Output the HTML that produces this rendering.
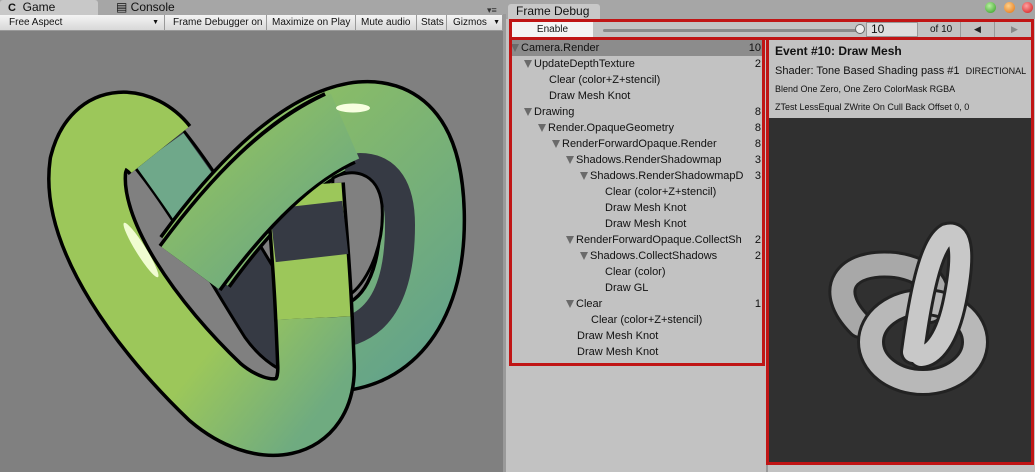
<!DOCTYPE html>
<html><head><style>
*{margin:0;padding:0;box-sizing:border-box}
body{width:1035px;height:472px;overflow:hidden;position:relative;background:#a6a6a6;font-family:"Liberation Sans",sans-serif;font-size:11px;color:#111}
.abs{position:absolute}
.tab{position:absolute;top:0;height:15px;font-size:12px;line-height:15px;padding-left:8px}
.tb{position:absolute;top:15px;height:16px;background:linear-gradient(#f4f4f4,#d8d8d8);border-right:1px solid #9a9a9a;border-bottom:1px solid #999;font-size:10px;line-height:16px;padding-left:8px;white-space:nowrap}
.row{position:absolute;left:0;width:252px;height:16px;line-height:16px;font-size:11px;white-space:nowrap;overflow:hidden}
.row .n{position:absolute;right:2px;top:0;background:#c2c2c2;padding-left:2px}
.tri{display:inline-block;width:0;height:0;border-left:4px solid transparent;border-right:4px solid transparent;border-top:8px solid #6a6a6a;margin-right:2px;vertical-align:-1px}
.red{position:absolute;border:3px solid #c01515}
</style></head><body>
<div class="abs" style="left:0;top:0;width:505px;height:15px;background:#a6a6a6"></div>
<div class="tab" style="left:0;width:98px;background:#c8c8c8;border-radius:3px 3px 0 0"><b style="font-size:11px">C</b>&nbsp; Game</div>
<div class="tab" style="left:108px;width:90px">▤ Console</div>
<div class="abs" style="left:487px;top:5px;font-size:9px;color:#333">▾≡</div>
<div class="tb" style="left:0;width:165px;padding-left:9px">Free Aspect<span style="position:absolute;right:5px;font-size:7px">▼</span></div>
<div class="tb" style="left:165px;width:102px">Frame Debugger on</div>
<div class="tb" style="left:267px;width:89px;padding-left:5px">Maximize on Play</div>
<div class="tb" style="left:356px;width:61px;padding-left:5px">Mute audio</div>
<div class="tb" style="left:417px;width:30px;padding-left:4px">Stats</div>
<div class="tb" style="left:447px;width:56px;padding-left:6px">Gizmos<span style="position:absolute;right:2px;font-size:7px">▼</span></div>
<div class="abs" style="left:0;top:31px;width:503px;height:441px;background:#808080"></div>
<div class="abs" style="left:503px;top:14px;width:3px;height:458px;background:#9a9a9a"></div>
<svg class="abs" style="left:0;top:0" width="503" height="472" viewBox="0 0 503 472">
<defs>
<linearGradient id="g1" x1="0" y1="0" x2="1" y2="1"><stop offset="0" stop-color="#9cc75a"/><stop offset="0.65" stop-color="#9cc75a"/><stop offset="1" stop-color="#6fab80"/></linearGradient>
<linearGradient id="g2" x1="0" y1="0" x2="1" y2="1"><stop offset="0" stop-color="#93c35e"/><stop offset="1" stop-color="#65a489"/></linearGradient>
</defs>
<!-- back tube -->
<path d="M160,150 C200,200 235,265 270,320 C295,355 330,355 360,345" fill="none" stroke="#000" stroke-width="64"/>
<path d="M160,150 C200,200 235,265 270,320 C295,355 330,355 360,345" fill="none" stroke="#363a44" stroke-width="58"/>
<path d="M160,150 C185,185 200,205 212,228" fill="none" stroke="#6fa88a" stroke-width="58"/>
<!-- right lobe + diagonal (back part) -->
<path d="M345,348 C400,338 424,282 422,212 C420,145 398,118 355,125 C300,135 240,200 195,262" fill="none" stroke="#000" stroke-width="88"/>
<path d="M345,348 C400,338 424,282 422,212 C420,145 398,118 355,125 C300,135 240,200 195,262" fill="none" stroke="url(#g2)" stroke-width="81"/>
<path d="M352,330 C385,318 400,282 400,225 C400,190 388,168 360,168" fill="none" stroke="#363a44" stroke-width="30" stroke-linecap="round"/>
<path d="M333,178 C350,168 378,170 382,205 C385,245 368,280 352,293 L330,250 Z" fill="#808080" stroke="#000" stroke-width="3"/>
<!-- vertical top (under diagonal) -->
<path d="M314,320 C312,270 308,230 305,185" fill="none" stroke="#000" stroke-width="80"/>
<path d="M314,320 C312,270 308,230 305,185" fill="none" stroke="#9cc75a" stroke-width="73"/>
<path d="M312,258 C310,240 308,222 306,205" fill="none" stroke="#363a44" stroke-width="73"/>
<!-- diagonal front -->
<path d="M340,128 C290,150 240,200 190,268" fill="none" stroke="#000" stroke-width="78"/>
<path d="M345,126 C290,150 240,200 190,268" fill="none" stroke="url(#g2)" stroke-width="71"/>
<ellipse cx="353" cy="108" rx="17" ry="4.5" fill="#f8ffe0"/>
<!-- left lobe front -->
<path d="M160,150 C140,125 100,118 88,165 C78,235 150,330 215,392 C262,432 318,425 316,365 L314,318" fill="none" stroke="#000" stroke-width="80"/>
<path d="M160,150 C140,125 100,118 88,165 C78,235 150,330 215,392 C262,432 318,425 316,365 L314,318" fill="none" stroke="url(#g1)" stroke-width="73"/>
<ellipse cx="141" cy="250" rx="5" ry="32" fill="#f4ffd8" transform="rotate(-32 141 250)" opacity="0.95"/>
</svg>
<!-- right panel -->
<div class="abs" style="left:506px;top:0;width:529px;height:472px;background:#a6a6a6"></div>
<div class="tab" style="left:508px;top:4px;width:92px;height:15px;line-height:15px;background:#c8c8c8;border-radius:3px 3px 0 0;font-size:12px">Frame Debug</div>
<div class="abs" style="left:985px;top:2px;width:11px;height:11px;border-radius:50%;background:radial-gradient(circle at 40% 35%,#b8f0a0,#2f9a1f)"></div>
<div class="abs" style="left:1004px;top:2px;width:11px;height:11px;border-radius:50%;background:radial-gradient(circle at 40% 35%,#ffd08a,#e07010)"></div>
<div class="abs" style="left:1022px;top:2px;width:11px;height:11px;border-radius:50%;background:radial-gradient(circle at 40% 35%,#ffa0a0,#d01515)"></div>
<div class="abs" style="left:506px;top:19px;width:529px;height:453px;background:#c2c2c2"></div>
<div class="abs" style="left:512px;top:22px;width:81px;height:15px;background:#f4f4f4;font-size:10px;line-height:15px;text-align:center">Enable</div>
<div class="abs" style="left:603px;top:29px;width:255px;height:3px;background:#8a8a8a;border-radius:2px"></div>
<div class="abs" style="left:855px;top:24px;width:10px;height:10px;border-radius:50%;background:#eee;border:1px solid #666"></div>
<div class="abs" style="left:866px;top:22px;width:52px;height:15px;background:#ddd;border:1px solid #999;font-size:12px;line-height:13px;padding-left:4px">10</div>
<div class="abs" style="left:930px;top:24px;font-size:10px;line-height:12px">of 10</div>
<div class="abs" style="left:960px;top:20px;width:1px;height:18px;background:#999"></div>
<div class="abs" style="left:994px;top:20px;width:1px;height:18px;background:#999"></div>
<div class="abs" style="left:974px;top:24px;font-size:9px;color:#222">◀</div>
<div class="abs" style="left:1011px;top:24px;font-size:9px;color:#888">▶</div>
<div class="abs" style="left:766px;top:38px;width:2px;height:434px;background:#999"></div>
<div class="abs" style="left:511px;top:40px;width:252px;height:330px">
<div class="row" style="top:0;background:#8c8c8c"><span class="tri"></span>Camera.Render<span class="n" style="background:#8c8c8c">10</span></div>
<div class="row" style="top:16px;padding-left:13px"><span class="tri"></span>UpdateDepthTexture<span class="n">2</span></div>
<div class="row" style="top:32px;padding-left:38px">Clear (color+Z+stencil)</div>
<div class="row" style="top:48px;padding-left:38px">Draw Mesh Knot</div>
<div class="row" style="top:64px;padding-left:13px"><span class="tri"></span>Drawing<span class="n">8</span></div>
<div class="row" style="top:80px;padding-left:27px"><span class="tri"></span>Render.OpaqueGeometry<span class="n">8</span></div>
<div class="row" style="top:96px;padding-left:41px"><span class="tri"></span>RenderForwardOpaque.Render<span class="n">8</span></div>
<div class="row" style="top:112px;padding-left:55px"><span class="tri"></span>Shadows.RenderShadowmap<span class="n">3</span></div>
<div class="row" style="top:128px;padding-left:69px"><span class="tri"></span>Shadows.RenderShadowmapD<span class="n">3</span></div>
<div class="row" style="top:144px;padding-left:94px">Clear (color+Z+stencil)</div>
<div class="row" style="top:160px;padding-left:94px">Draw Mesh Knot</div>
<div class="row" style="top:176px;padding-left:94px">Draw Mesh Knot</div>
<div class="row" style="top:192px;padding-left:55px"><span class="tri"></span>RenderForwardOpaque.CollectSh<span class="n">2</span></div>
<div class="row" style="top:208px;padding-left:69px"><span class="tri"></span>Shadows.CollectShadows<span class="n">2</span></div>
<div class="row" style="top:224px;padding-left:94px">Clear (color)</div>
<div class="row" style="top:240px;padding-left:94px">Draw GL</div>
<div class="row" style="top:256px;padding-left:55px"><span class="tri"></span>Clear<span class="n">1</span></div>
<div class="row" style="top:272px;padding-left:80px">Clear (color+Z+stencil)</div>
<div class="row" style="top:288px;padding-left:66px">Draw Mesh Knot</div>
<div class="row" style="top:304px;padding-left:66px">Draw Mesh Knot</div>
</div>
<div class="abs" style="left:769px;top:40px;width:266px;height:78px;background:#c2c2c2;overflow:hidden;white-space:nowrap">
<div class="abs" style="left:6px;top:4px;font-size:12px;font-weight:bold">Event #10: Draw Mesh</div>
<div class="abs" style="left:6px;top:25px;font-size:11px">Shader: Tone Based Shading pass #1 &nbsp;<span style="font-size:9px">DIRECTIONAL</span></div>
<div class="abs" style="left:6px;top:44px;font-size:9px">Blend One Zero, One Zero ColorMask RGBA</div>
<div class="abs" style="left:6px;top:62px;font-size:9px">ZTest LessEqual ZWrite On Cull Back Offset 0, 0</div>
</div>
<div class="abs" style="left:769px;top:118px;width:264px;height:346px;background:#303030"></div>
<svg class="abs" style="left:765px;top:120px" width="270" height="352">
<g fill="none" stroke-linecap="round">
<path d="M95,205 C60,170 80,140 130,145 C165,150 180,170 165,190" stroke="#222" stroke-width="28"/>
<path d="M95,205 C60,170 80,140 130,145 C165,150 180,170 165,190" stroke="#a8a8a8" stroke-width="22"/>
<ellipse cx="158" cy="222" rx="52" ry="40" stroke="#222" stroke-width="28"/>
<ellipse cx="158" cy="222" rx="52" ry="40" stroke="#b8b8b8" stroke-width="22"/>
<path d="M148,232 C155,180 165,125 182,115 C198,110 198,140 190,180 C182,220 168,235 156,236" stroke="#222" stroke-width="26"/>
<path d="M148,232 C155,180 165,125 182,115 C198,110 198,140 190,180 C182,220 168,235 156,236" stroke="#c8c8c8" stroke-width="20"/>
</g>
</svg>
<div class="red" style="left:509px;top:19px;width:525px;height:21px"></div>
<div class="red" style="left:509px;top:37px;width:256px;height:329px"></div>
<div class="red" style="left:766px;top:37px;width:268px;height:428px"></div>
</body></html>
